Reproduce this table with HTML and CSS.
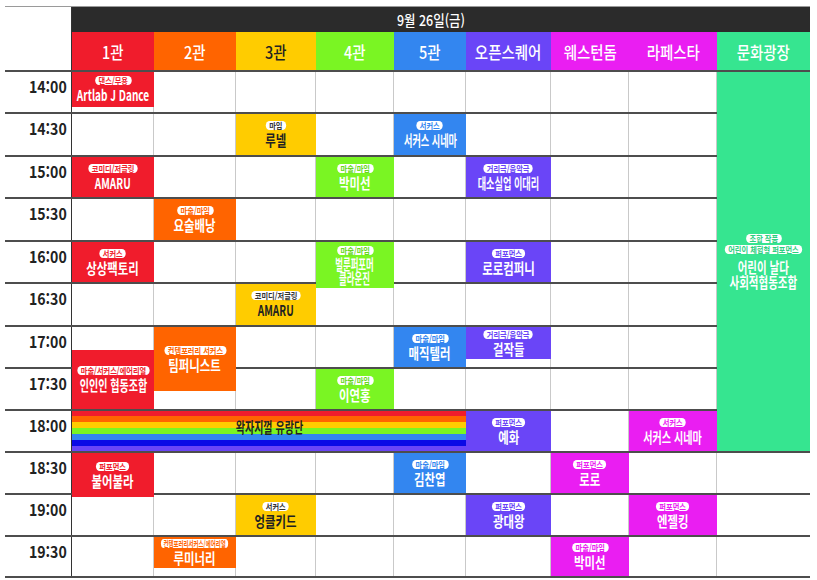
FILE: index.html
```html
<!DOCTYPE html>
<html lang="ko">
<head>
<meta charset="utf-8">
<title>9월 26일(금) 공연 시간표</title>
<link rel="stylesheet" href="styles.css">
</head>
<body>
<div class="table">
  <!-- header -->
  <div class="timecol"></div>
  <div class="dateBar"><span class="dateText">9월 26일(금)</span></div>
  <div class="head red v1"><span>1관</span></div>
  <div class="head orange v2"><span>2관</span></div>
  <div class="head yellow v3"><span>3관</span></div>
  <div class="head lime v4"><span>4관</span></div>
  <div class="head blue v5"><span>5관</span></div>
  <div class="head purple v6"><span>오픈스퀘어</span></div>
  <div class="head magenta v7"><span>웨스턴돔</span></div>
  <div class="head magenta v8"><span>라페스타</span></div>
  <div class="head mint v9"><span>문화광장</span></div>

  <!-- column dividers -->
  <div class="colline v1"></div>
  <div class="colline v2"></div>
  <div class="colline v3"></div>
  <div class="colline v4"></div>
  <div class="colline v5"></div>
  <div class="colline v6"></div>
  <div class="colline v7"></div>
  <div class="colline v8"></div>
  <div class="colline v9 last"></div>

  <!-- time rows -->
  <div class="row h1400"><span class="time">14:00</span></div>
  <div class="row h1430"><span class="time">14:30</span></div>
  <div class="row h1500"><span class="time">15:00</span></div>
  <div class="row h1530"><span class="time">15:30</span></div>
  <div class="row h1600"><span class="time">16:00</span></div>
  <div class="row h1630"><span class="time">16:30</span></div>
  <div class="row h1700"><span class="time">17:00</span></div>
  <div class="row h1730"><span class="time">17:30</span></div>
  <div class="row h1800"><span class="time">18:00</span></div>
  <div class="row h1830"><span class="time">18:30</span></div>
  <div class="row h1900"><span class="time">19:00</span></div>
  <div class="row h1930"><span class="time">19:30</span></div>

  <!-- 1관 -->
  <div class="ev red v1 h1400 part" style="height:35px"><span class="tag">댄스/무용</span><span class="ttl lat">Artlab J Dance</span></div>
  <div class="ev red v1 h1500"><span class="tag">코미디/저글링</span><span class="ttl lat">AMARU</span></div>
  <div class="ev red v1 h1600"><span class="tag">서커스</span><span class="ttl">상상팩토리</span></div>
  <div class="ev red v1 h1700 span2 part" style="margin-top:25px;height:59px"><span class="tag">마술/서커스/에어리얼</span><span class="ttl fit">인인인 협동조합</span></div>
  <div class="ev red v1 h1830 span2 part" style="height:44px"><span class="tag">퍼포먼스</span><span class="ttl">불어불라</span></div>

  <!-- 2관 -->
  <div class="ev orange v2 h1530"><span class="tag">마술/마임</span><span class="ttl">요술배낭</span></div>
  <div class="ev orange v2 h1700 span2 part" style="height:64px"><span class="tag">컨템포러리 서커스</span><span class="ttl">팀퍼니스트</span></div>
  <div class="ev orange v2 h1930 part" style="height:31px"><span class="tag tight">컨템포러리서커스/에어리얼</span><span class="ttl">루미너리</span></div>

  <!-- 3관 -->
  <div class="ev yellow v3 h1430"><span class="tag">마임</span><span class="ttl">루넬</span></div>
  <div class="ev yellow v3 h1630"><span class="tag">코미디/저글링</span><span class="ttl lat">AMARU</span></div>
  <div class="ev yellow v3 h1900"><span class="tag">서커스</span><span class="ttl">엉클키드</span></div>

  <!-- 4관 -->
  <div class="ev lime v4 h1500"><span class="tag">마술/마임</span><span class="ttl">박미선</span></div>
  <div class="ev lime v4 h1600 span2 part" style="height:46px"><span class="tag">마술/마임</span><span class="ttl two fit3">벌룬퍼포머<br>클라운진</span></div>
  <div class="ev lime v4 h1730"><span class="tag">마술/마임</span><span class="ttl">이연홍</span></div>

  <!-- 5관 -->
  <div class="ev blue v5 h1430"><span class="tag">서커스</span><span class="ttl fit2">서커스 시네마</span></div>
  <div class="ev blue v5 h1700"><span class="tag">마술/마임</span><span class="ttl">매직텔러</span></div>
  <div class="ev blue v5 h1830"><span class="tag">마술/마임</span><span class="ttl">김찬엽</span></div>

  <!-- 오픈스퀘어 -->
  <div class="ev purple v6 h1500"><span class="tag">거리극/음악극</span><span class="ttl fit2">대소실업 이대리</span></div>
  <div class="ev purple v6 h1600"><span class="tag">퍼포먼스</span><span class="ttl">로로컴퍼니</span></div>
  <div class="ev purple v6 h1700 part" style="height:32px"><span class="tag">거리극/음악극</span><span class="ttl">걸작들</span></div>
  <div class="ev purple v6 h1800"><span class="tag">퍼포먼스</span><span class="ttl">예화</span></div>
  <div class="ev purple v6 h1900"><span class="tag">퍼포먼스</span><span class="ttl">광대왕</span></div>

  <!-- 웨스턴돔 -->
  <div class="ev magenta v7 h1830"><span class="tag">퍼포먼스</span><span class="ttl">로로</span></div>
  <div class="ev magenta v7 h1930"><span class="tag">마술/마임</span><span class="ttl">박미선</span></div>

  <!-- 라페스타 -->
  <div class="ev magenta v8 h1800"><span class="tag">서커스</span><span class="ttl fit">서커스 시네마</span></div>
  <div class="ev magenta v8 h1900"><span class="tag">퍼포먼스</span><span class="ttl">엔젤킹</span></div>

  <!-- 문화광장 -->
  <div class="ev mint v9 h1400 span9"><span class="tag">조합 작품</span><span class="tag">어린이 체험형 퍼포먼스</span><span class="ttl two fit big">어린이 날다<br>사회적협동조합</span></div>

  <!-- 왁자지껄 유랑단 -->
  <div class="ev rainbow wide h1800"><span class="ttl fit">왁자지껄 유랑단</span></div>
</div>
</body>
</html>
```

FILE: styles.css
```css
* { box-sizing: border-box; }

html, body {
  margin: 0;
  padding: 0;
  background: #ffffff;
}

body {
  font-family: "Noto Sans CJK KR", "Noto Sans", sans-serif;
  color: #222;
}

.table {
  display: grid;
  grid-template-columns: 67px 82px 82px 80px 78px 72px 85px 78px 88px 93px;
  grid-template-rows: 25px 38px 42px 43px 42px 43px 42px 43px 42px 42px 42px 42px 42px 41px;
  width: 805px;
  margin: 6px 0 0 5px;
  border-top: 1px solid #9a9a9a;
  border-bottom: 2px solid #4d4d4d;
}

/* colours */
.red { background: #f01c2c; --c: #f01c2c; }
.orange { background: #ff6400; --c: #ff6400; }
.yellow { background: #ffcc00; --c: #333; }
.lime { background: #7af523; --c: #66d81a; }
.blue { background: #3386f0; --c: #3386f0; }
.purple { background: #6a45f7; --c: #6a45f7; }
.magenta { background: #ea1ef2; --c: #ea1ef2; }
.mint { background: #36e590; --c: #2ccf7f; }

/* placement: venues */
.v1 { grid-column: 2; }
.v2 { grid-column: 3; }
.v3 { grid-column: 4; }
.v4 { grid-column: 5; }
.v5 { grid-column: 6; }
.v6 { grid-column: 7; }
.v7 { grid-column: 8; }
.v8 { grid-column: 9; }
.v9 { grid-column: 10; }
.wide { grid-column: 2 / 7; }

/* placement: times */
.h1400 { grid-row-start: 3; }
.h1430 { grid-row-start: 4; }
.h1500 { grid-row-start: 5; }
.h1530 { grid-row-start: 6; }
.h1600 { grid-row-start: 7; }
.h1630 { grid-row-start: 8; }
.h1700 { grid-row-start: 9; }
.h1730 { grid-row-start: 10; }
.h1800 { grid-row-start: 11; }
.h1830 { grid-row-start: 12; }
.h1900 { grid-row-start: 13; }
.h1930 { grid-row-start: 14; }
.span2 { grid-row-end: span 2; }
.span9 { grid-row-end: span 9; }

/* header */
.timecol {
  grid-column: 1;
  grid-row: 1 / 15;
  border-right: 1px solid #333;
}

.dateBar {
  grid-column: 2 / -1;
  grid-row: 1;
  background: #2b2b2b;
  display: flex;
  align-items: center;
  justify-content: center;
  padding-right: 20px;
}

.dateText {
  display: inline-block;
  color: #fff;
  font-size: 15px;
  font-weight: 500;
  line-height: 1;
  transform: scaleX(0.83);
  white-space: nowrap;
}

.head {
  grid-row: 2;
  display: flex;
  align-items: center;
  justify-content: center;
  color: #fff;
}

.head span {
  display: inline-block;
  font-size: 17px;
  font-weight: 500;
  line-height: 1;
  transform: scaleX(0.85);
  white-space: nowrap;
}

.head.yellow { color: #222; }

/* grid lines */
.colline {
  grid-row: 3 / 15;
  border-right: 1px solid #c9c9c9;
}

.colline.last { border-right: none; }

.row {
  grid-column: 1 / -1;
  border-top: 2px solid #4d4d4d;
}

.time {
  display: block;
  width: 67px;
  padding: 4px 6px 0 0;
  text-align: right;
  font-size: 16px;
  font-weight: 700;
  line-height: 20px;
  color: #222;
  transform: scaleX(0.88);
  transform-origin: right center;
}

/* events */
.ev {
  margin-top: 2px;
  display: flex;
  flex-direction: column;
  align-items: center;
  justify-content: center;
  color: #fff;
  min-width: 0;
  position: relative;
}

.ev.part { align-self: start; }

.ev.yellow { color: #222; }

.tag {
  display: inline-block;
  background: #fff;
  color: var(--c);
  border-radius: 6px;
  padding: 0 4px;
  font-size: 8.5px;
  font-weight: 700;
  line-height: 9px;
  white-space: nowrap;
  transform: scaleX(0.85);
  margin-bottom: 2px;
}

.tag.tight { transform: scaleX(0.64); }

.ttl {
  display: inline-block;
  font-size: 15px;
  font-weight: 700;
  line-height: 16px;
  white-space: nowrap;
  text-align: center;
  transform: scaleX(0.76);
}

.ttl.lat { transform: scaleX(0.67); }
.ttl.fit { transform: scaleX(0.67); }
.ttl.fit2 { transform: scaleX(0.61); }
.ttl.fit3 { transform: scaleX(0.56); }

.ttl.two { line-height: 14px; }
.ttl.big { margin-top: 3px; line-height: 15px; }
.ev.mint .ttl.big { transform: scaleX(0.7); }

.rainbow {
  color: #222;
  justify-content: flex-start;
  padding-top: 8px;
  background: linear-gradient(to bottom,
    #f01c2c 0 5px,
    #ff6400 5px 11px,
    #ffcc00 11px 17px,
    #7af523 17px 23px,
    #3386f0 23px 29px,
    #0a0ae6 29px 35px,
    #6a45f7 35px 40px);
}
```
